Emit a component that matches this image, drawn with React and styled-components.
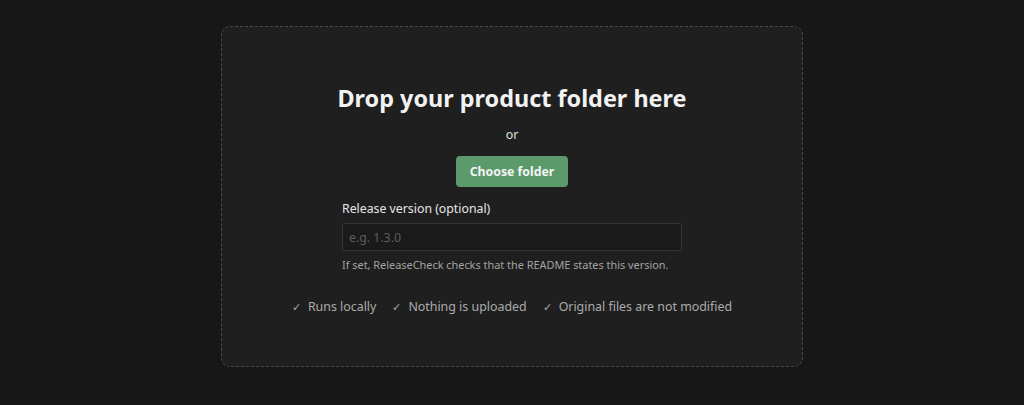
import React from "react";
import styled, { createGlobalStyle } from "styled-components";

const GlobalStyle = createGlobalStyle`
  html, body {
    margin: 0;
    padding: 0;
    background: #171717;
    font-family: "Noto Sans", "Open Sans", sans-serif;
    color: #e6e6e6;
  }
`;

const Page = styled.div`
  min-height: 405px;
  padding-top: 26px;
  display: flex;
  justify-content: center;
  align-items: flex-start;
  box-sizing: border-box;
`;

const DropZone = styled.div`
  width: 582px;
  box-sizing: border-box;
  border: 1px dashed #4a4a4a;
  border-radius: 9px;
  background: #1f1f1f;
  padding: 57px 0 50px;
  display: flex;
  flex-direction: column;
  align-items: center;
`;

const Title = styled.h1`
  margin: 0;
  font-size: 23.4px;
  line-height: 29px;
  font-weight: 700;
  color: #f2f2f2;
`;

const Or = styled.div`
  margin-top: 13px;
  font-size: 12.4px;
  line-height: 18px;
  color: #e0e0e0;
`;

const ChooseButton = styled.button`
  margin-top: 12px;
  height: 31px;
  padding: 0 14px;
  border: none;
  border-radius: 4px;
  background: #5a9a6b;
  color: #f4f4f4;
  font-family: inherit;
  font-size: 12.3px;
  font-weight: 700;
  cursor: pointer;
`;

const Field = styled.div`
  margin-top: 13px;
  width: 340px;
  display: flex;
  flex-direction: column;
`;

const Label = styled.label`
  font-size: 12.3px;
  line-height: 18px;
  color: #e6e6e6;
`;

const Input = styled.input`
  margin-top: 5px;
  height: 28px;
  box-sizing: border-box;
  padding: 0 6px;
  background: #1a1a1a;
  border: 1px solid #363636;
  border-radius: 3px;
  color: #e6e6e6;
  font-family: inherit;
  font-size: 12.3px;
  outline: none;

  &::placeholder {
    color: #5e5e5e;
  }
`;

const Help = styled.div`
  margin-top: 6px;
  font-size: 10.9px;
  line-height: 15px;
  color: #a3a3a3;
`;

const Promises = styled.ul`
  list-style: none;
  margin: 26px 0 0;
  padding: 0;
  display: flex;
  gap: 16px;
`;

const Promise = styled.li`
  font-size: 12.4px;
  line-height: 18px;
  color: #ababab;

  &::before {
    content: "✓";
    margin-right: 7px;
    font-size: 11px;
  }
`;

export default function App() {
  return (
    <>
      <GlobalStyle />
      <Page>
        <DropZone>
          <Title>Drop your product folder here</Title>
          <Or>or</Or>
          <ChooseButton>Choose folder</ChooseButton>
          <Field>
            <Label htmlFor="version">Release version (optional)</Label>
            <Input id="version" placeholder="e.g. 1.3.0" />
            <Help>If set, ReleaseCheck checks that the README states this version.</Help>
          </Field>
          <Promises>
            <Promise>Runs locally</Promise>
            <Promise>Nothing is uploaded</Promise>
            <Promise>Original files are not modified</Promise>
          </Promises>
        </DropZone>
      </Page>
    </>
  );
}
